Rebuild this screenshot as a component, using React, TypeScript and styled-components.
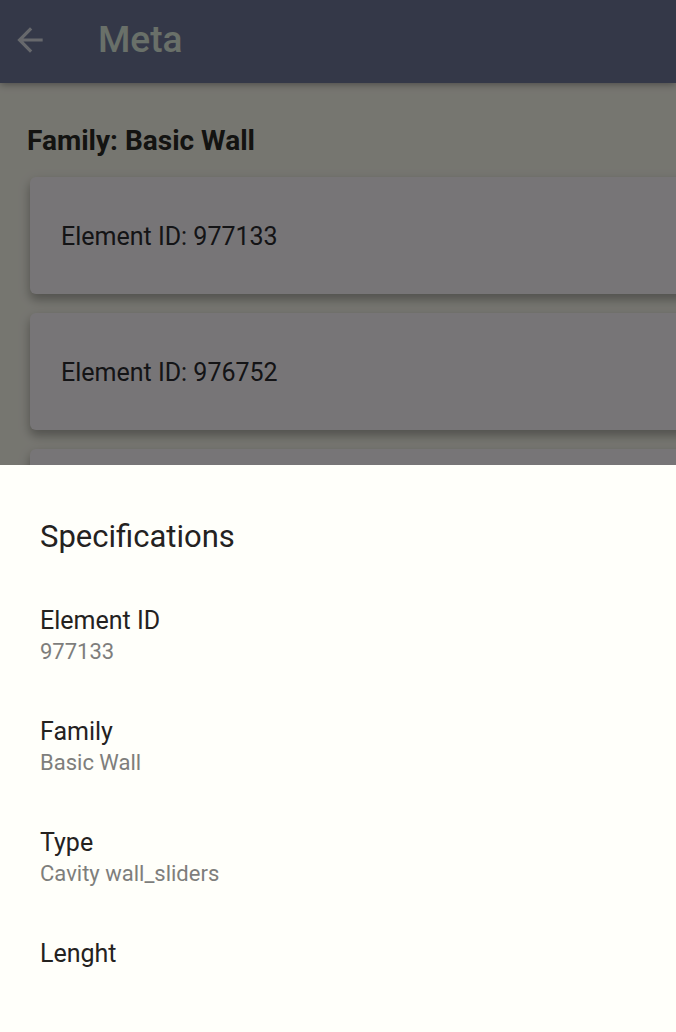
import React from 'react';
import styled, { createGlobalStyle } from 'styled-components';

const GlobalStyle = createGlobalStyle`
  *, *::before, *::after {
    box-sizing: border-box;
  }

  body {
    margin: 0;
    background: #fdfcf1;
    color: #24221f;
    font-family: Roboto, sans-serif;
  }

  h1, h2, p, ul, dl, dd {
    margin: 0;
    padding: 0;
  }
`;

const Screen = styled.div`
  display: flex;
  flex-direction: column;
  height: 100vh;
  overflow: hidden;
`;

const AppBar = styled.header`
  display: flex;
  align-items: center;
  gap: 49px;
  flex: none;
  padding: 20px 11px 23px;
  background: #6f799b;
  box-shadow: 0 1px 8px rgba(0, 0, 0, 0.4);
`;

const BackButton = styled.button`
  display: flex;
  padding: 0;
  border: 0;
  background: none;
  color: #dcdfe8;
`;

const Title = styled.h1`
  color: #e2efe0;
  font-size: 37px;
  font-weight: 500;
  line-height: 40px;
`;

const Content = styled.main`
  padding: 42px 0 0 27px;
`;

const GroupTitle = styled.h2`
  color: #2a2a26;
  font-size: 28px;
  font-weight: 700;
  line-height: 32px;
`;

const CardList = styled.ul`
  display: flex;
  flex-direction: column;
  gap: 19px;
  margin-right: -16px;
  padding: 20px 0 0 3px;
  list-style: none;
`;

const Card = styled.li`
  min-height: 117px;
  padding: 45px 31px 43px;
  border-radius: 6px;
  background: #fffbff;
  box-shadow: 0 6px 8px rgba(0, 0, 0, 0.2), 0 4px 14px rgba(0, 0, 0, 0.14);
  color: #2c2c30;
  font-size: 25px;
  line-height: 29px;
`;

const Scrim = styled.div`
  position: fixed;
  inset: 0;
  display: flex;
  flex-direction: column;
  justify-content: flex-end;
  background: rgba(0, 0, 0, 0.535);
`;

const Sheet = styled.section`
  padding: 52px 40px 62px;
  background: #fffffa;
`;

const SheetTitle = styled.h2`
  font-size: 31px;
  font-weight: 400;
  line-height: 40px;
`;

const Specs = styled.dl`
  display: flex;
  flex-direction: column;
  gap: 49px;
  padding-top: 48px;
`;

const Term = styled.dt`
  font-size: 25px;
  line-height: 32px;
`;

const Detail = styled.dd`
  color: #7e7e7c;
  font-size: 22px;
  line-height: 30px;
`;

const elements = ['Element ID: 977133', 'Element ID: 976752', ''];

const specs = [
  { name: 'Element ID', value: '977133' },
  { name: 'Family', value: 'Basic Wall' },
  { name: 'Type', value: 'Cavity wall_sliders' },
  { name: 'Lenght', value: '' },
];

function BackIcon() {
  return (
    <svg width="38" height="38" viewBox="0 0 24 24" fill="currentColor" aria-hidden="true">
      <path d="M20 11H7.83l5.59-5.59L12 4l-8 8 8 8 1.41-1.41L7.83 13H20v-2z" />
    </svg>
  );
}

export default function App() {
  return (
    <>
      <GlobalStyle />
      <Screen>
        <AppBar>
          <BackButton type="button" aria-label="Back">
            <BackIcon />
          </BackButton>
          <Title>Meta</Title>
        </AppBar>
        <Content>
          <GroupTitle>Family: Basic Wall</GroupTitle>
          <CardList>
            {elements.map((label, index) => (
              <Card key={index}>{label}</Card>
            ))}
          </CardList>
        </Content>
      </Screen>
      <Scrim>
        <Sheet role="dialog" aria-labelledby="sheet-title">
          <SheetTitle id="sheet-title">Specifications</SheetTitle>
          <Specs>
            {specs.map((spec) => (
              <div key={spec.name}>
                <Term>{spec.name}</Term>
                {spec.value && <Detail>{spec.value}</Detail>}
              </div>
            ))}
          </Specs>
        </Sheet>
      </Scrim>
    </>
  );
}
